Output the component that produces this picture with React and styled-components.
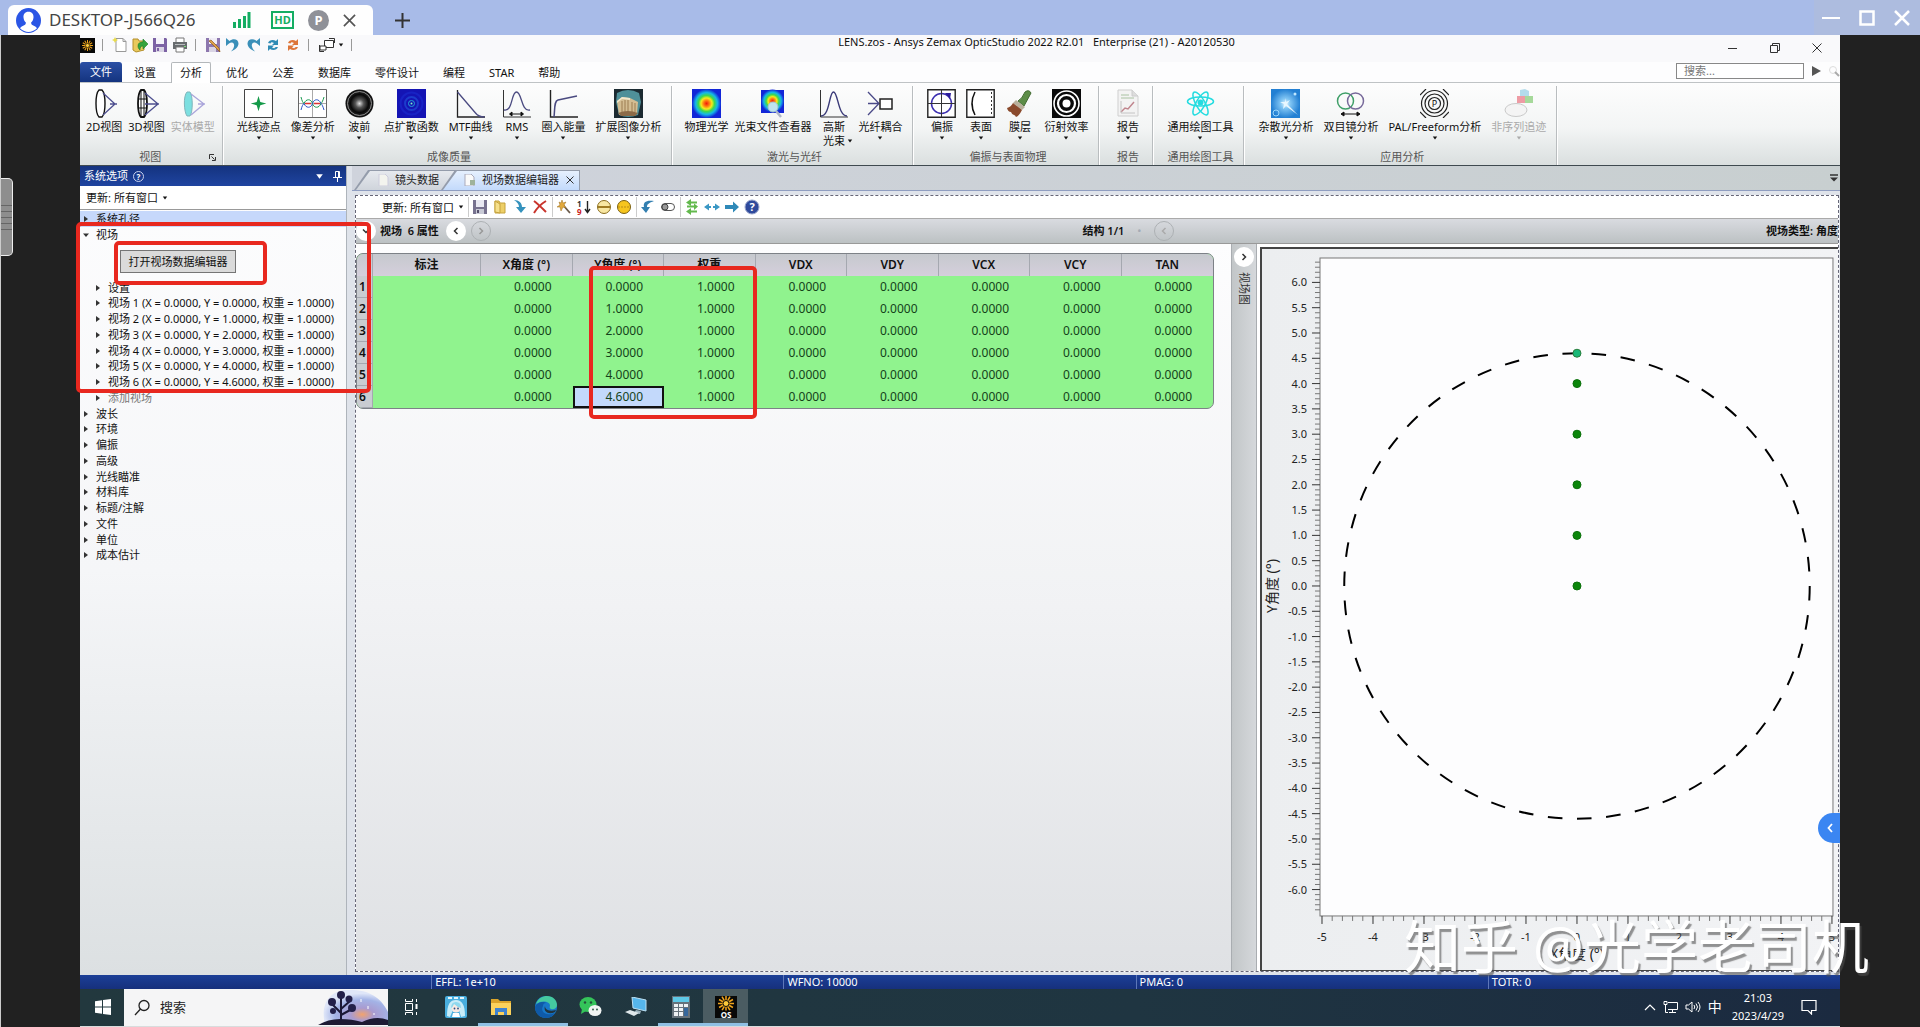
import React from "react";
import styled, { createGlobalStyle, css } from "styled-components";

const GlobalStyle = createGlobalStyle`
  * {
    box-sizing: border-box;
  }

  body {
    margin: 0;
    font-family: "Noto Sans", "Noto Sans CJK SC", sans-serif;
    font-size: 11px;
    line-height: 16px;
    color: #111;
  }

  button,
  input,
  select {
    font: inherit;
    color: inherit;
    margin: 0;
    padding: 0;
    border: none;
    background: none;
  }

  svg {
    display: block;
    flex: none;
  }
`;

/* ---------- small drawings ---------- */

const Svg = ({ w = 16, h = w, vb = 16, vh = vb, children }) => (
  <svg width={w} height={h} viewBox={`0 0 ${vb} ${vh}`} fill="none" aria-hidden="true">
    {children}
  </svg>
);

const Caret = ({ size = 6 }) => (
  <Svg w={size} vb={6}>
    <path d="M0.8 1.5h4.4L3 4.5z" fill="currentColor" />
  </Svg>
);

const Arrow = ({ open }) => (
  <Svg w={6} vb={6}>
    <path d={open ? "M0 1.5h6L3 5z" : "M1 0l4 3-4 3z"} fill="#333" />
  </Svg>
);

const Sun = ({ size = 16, label }) => (
  <Svg w={size} vb={22}>
    <rect width="22" height="22" fill="#080808" />
    <g stroke="#f0a41c" strokeWidth="1.5">
      {[0, 30, 60, 90, 120, 150].map((a) => (
        <path
          key={a}
          d="M3 0h16"
          transform={label ? `translate(3 7.5) rotate(${a} 8 0) translate(-3)` : `translate(0 11) rotate(${a} 11 0)`}
        />
      ))}
    </g>
    <circle cx="11" cy={label ? 7.5 : 11} r="3" fill="#fcc93a" stroke="#080808" />
    {label && <rect y="14.5" width="22" height="7.5" fill="#080808" />}
    {label && (
      <text x="11" y="21.5" fill="#fff" fontSize="8" fontWeight="700" textAnchor="middle">
        OS
      </text>
    )}
  </Svg>
);

const quick = {
  new: (
    <Svg>
      <path d="M4 1.5h7l3 3v10H4z" fill="#fff" stroke="#999" />
      <path d="M11 1.5v3h3" stroke="#999" />
      <path d="M3 0l1 2 2 1-2 1-1 2-1-2-2-1 2-1z" fill="#e9dc4a" />
    </Svg>
  ),
  open: (
    <Svg>
      <path d="M1 2h5l1 2h5v9l-8 2-3-2z" fill="#e9c95c" stroke="#b48f2b" />
      <path d="M6 9c0-3 2-4 5-4V2l5 5-5 5V9c-2 0-3 1-3 4-1-1-2-2-2-4z" fill="#35a33c" stroke="#1c7d29" strokeWidth=".6" />
    </Svg>
  ),
  save: (
    <Svg>
      <path d="M1 1h13l1 1v13H1z" fill="#7c62a4" />
      <path d="M4 1h8v6H4z" fill="#f5f3fa" />
      <path d="M4 10h8v5H4z" fill="#d9d4e4" />
      <path d="M5 11h2v3H5z" fill="#7c62a4" />
    </Svg>
  ),
  print: (
    <Svg>
      <path d="M4 1h8v5H4z" fill="#fff" stroke="#777" />
      <path d="M1 5h14v7H1z" fill="#676b6e" />
      <path d="M3 7h10v1H3z" fill="#b8bcbe" />
      <path d="M4 10h8v5H4z" fill="#fff" stroke="#777" />
      <path d="M12 9h2v1h-2z" fill="#7be07b" />
    </Svg>
  ),
  saveAs: (
    <Svg>
      <path d="M1 1h14v14H1z" fill="#8d77ae" />
      <path d="M4 1h8v6H4z" fill="#f0edf6" />
      <path d="M4 10h7v5H4z" fill="#d9d4e4" />
      <path d="M4 4l9 9 2 2-1-4-8-8z" fill="#dfa046" stroke="#8e5c1d" strokeWidth=".7" />
    </Svg>
  ),
  undo: (
    <Svg>
      <path d="M1 1v8l3-2.5c3-2.5 6-.5 5 3-.5 2-1.5 3.5-3 5 4-1.5 7.5-4.500 7.5-8C13.500 2 8 1 4.500 4z" fill="#3a8fb8" />
    </Svg>
  ),
  redo: (
    <Svg>
      <path d="M15 1v8l-3-2.5c-3-2.5-6-.5-5 3 .5 2 1.5 3.5 3 5-4-1.500-7.500-4.500-7.500-8C2.500 2 8 1 11.500 4z" fill="#3a8fb8" />
    </Svg>
  ),
};

const Sync = ({ color }) => (
  <Svg>
    <path d="M3 6c1-3 5-4 8-2l2-2v6H7l2-2C7 5 6 5 5.5 6.5z" fill={color} />
    <path d="M13 10c-1 3-5 4-8 2l-2 2V8.5h6l-2 2c2 1 3 1 3.5-.5z" fill={color} />
  </Svg>
);

const Windows = () => (
  <Svg w={18} h={16} vb={18} vh={16}>
    <path d="M6.5 3.5h9v7h-9z" fill="#fff" stroke="#333" />
    <path d="M11 1.5h5.5V6M6 14.5H1.5V8" stroke="#333" />
    <path d="M2 9h6v4H2z" fill="#fff" stroke="#333" />
  </Svg>
);

const lensPath = "M9 1c-4 4-4 23 0 27h3c4-4 4-23 0-27z";

const ribbonIcons = {
  lens2d: (
    <Svg w={29} vb={29}>
      <path d={lensPath} fill="#fff" stroke="#111" strokeWidth="1.4" />
      <path d="M13 4l12 11-12 11M20 15h7" stroke="#4d4f8f" strokeWidth="1.3" />
    </Svg>
  ),
  lens3d: (
    <Svg w={29} vb={29}>
      <path d={lensPath} fill="#fff" stroke="#111" strokeWidth="1.8" />
      <path d="M9 1v27M12 1v27M6 10h9M6 19h9" stroke="#111" />
      <path d="M13 4l13 11-13 11M13 15h14" stroke="#4d4f8f" strokeWidth="1.3" />
    </Svg>
  ),
  solid: (
    <Svg w={29} vb={29}>
      <path d="M9 3c-4 4-3 20 0 24h3c3-4 3-20 0-24z" fill="#7cdfe0" stroke="#7fb5bb" />
      <path d="M13 5l13 10-13 11M20 15h7" stroke="#aaa5da" strokeWidth="1.3" />
    </Svg>
  ),
  spot: (
    <Svg w={29} vb={29}>
      <path d="M.5.5h28v28H.5z" fill="#fff" stroke="#444" />
      <path d="M14.5 7l1.8 6 6 1.5-6 1.7-1.8 6-1.8-6-6-1.7 6-1.5z" fill="#149a49" />
    </Svg>
  ),
  fan: (
    <Svg w={29} vb={29}>
      <path d="M.5.5h28v28H.5z" fill="#fff" stroke="#666" />
      <path d="M14.5 1v27M1 14.5h27" stroke="#aaa" />
      <path d="M3 8c1 4 2 6 3 6.5 2-5 7-5 8.500 0s6.500 5 8.500 0c1-1 2-3 3-6.500" stroke="#1a9a50" />
      <path d="M3 21c1-4 2-6 3-6.500 2 5 7 5 8.500 0s6.500-5 8.500 0c1 1 2 3 3 6.500" stroke="#2a55c8" />
      <path d="M7 14.5h6M16 14.5h6" stroke="#d33" strokeWidth="1.5" />
    </Svg>
  ),
  wave: (
    <Svg w={29} vb={29}>
      <defs>
        <radialGradient id="wave">
          <stop offset="0" stopColor="#ddd" />
          <stop offset=".35" stopColor="#555" />
          <stop offset=".75" stopColor="#080808" />
          <stop offset="1" stopColor="#222" />
        </radialGradient>
      </defs>
      <circle cx="14.5" cy="14.5" r="14" fill="#111" />
      <circle cx="14.5" cy="14.5" r="12" fill="url(#wave)" stroke="#8d8d8d" />
    </Svg>
  ),
  psf: (
    <Svg w={29} vb={29}>
      <path d="M0 0h29v29H0z" fill="#1414b4" />
      <circle cx="14.5" cy="14.5" r="11" stroke="#1822c4" strokeWidth="2" />
      <circle cx="14.5" cy="14.5" r="6.5" stroke="#1c3ccc" strokeWidth="2" />
      <circle cx="14.5" cy="14.5" r="3" stroke="#23a2d8" />
      <circle cx="14.5" cy="14.5" r="1" fill="#7df0c0" />
    </Svg>
  ),
  mtf: (
    <Svg w={29} vb={29}>
      <path d="M1.5 1v27H29" stroke="#222" strokeWidth="1.3" />
      <path d="M1.5 3l18 21q3 4 9 4" stroke="#4a4a80" strokeWidth="1.3" />
    </Svg>
  ),
  rms: (
    <Svg w={29} vb={29}>
      <path d="M1.5 1v27H29" stroke="#333" />
      <path d="M2 21c9 2 7-18 12.5-18S19 23 28 21" stroke="#4a4a80" strokeWidth="1.3" />
      <path d="M8 25h13M10 23l-2.5 2 2.5 2zM19 23l2.5 2-2.5 2z" stroke="#111" fill="#111" />
    </Svg>
  ),
  energy: (
    <Svg w={29} vb={29}>
      <path d="M1.5 1v27H29" stroke="#222" strokeWidth="1.4" />
      <path d="M5 28c1-8 0-16 4-17l19-4" stroke="#4a4a80" strokeWidth="1.5" />
    </Svg>
  ),
  image: (
    <Svg w={29} vb={29}>
      <path d="M0 0h29v29H0z" fill="#1b2a31" />
      <path d="M3 4q11-6 22 0l2 9-3 13q-10 4-19 0L2 13z" fill="#4f9099" />
      <path d="M3 12l5-4 8 1 8 4-1 12-18 1z" fill="#d3bd92" />
      <path d="M3 12l5-4 8 1v2l-8-1-5 4z" fill="#f1e7cc" />
      <path d="M8 12v12M11 11v13M14 11v13M18 13v10M21 14v9" stroke="#9b7c50" />
      <path d="M4 24q10-4 20 0l-3 3H7z" fill="#8c6b48" />
    </Svg>
  ),
  optics: (
    <Svg w={29} vb={29}>
      <defs>
        <radialGradient id="heat">
          <stop offset="0" stopColor="#f01c0c" />
          <stop offset=".2" stopColor="#ff7a10" />
          <stop offset=".38" stopColor="#f4ec1c" />
          <stop offset=".55" stopColor="#3fd94a" />
          <stop offset=".75" stopColor="#15b8e8" />
          <stop offset="1" stopColor="#1226d8" />
        </radialGradient>
      </defs>
      <path d="M0 0h29v29H0z" fill="#1226d8" />
      <circle cx="14.5" cy="14.5" r="14.5" fill="url(#heat)" />
    </Svg>
  ),
  beam: (
    <Svg w={29} vb={29}>
      <path d="M3 1h23v23H3z" fill="#1226d8" />
      <circle cx="14.5" cy="12" r="11.5" fill="url(#heat)" />
      <path d="M18 22l5 6" stroke="#aeb6c8" strokeWidth="2.5" />
      <circle cx="15" cy="18" r="5" fill="#bfe3ee" stroke="#a2c4cc" />
    </Svg>
  ),
  gauss: (
    <Svg w={29} vb={29}>
      <path d="M1.5 1v27H29" stroke="#333" />
      <path d="M2 27c9 0 8-24 12.5-24S19 27 28 27" stroke="#3a3a78" strokeWidth="1.4" />
    </Svg>
  ),
  fiber: (
    <Svg w={29} vb={29}>
      <path d="M2 3l11 11.5L2 26M2 14.5h11" stroke="#4a4a88" strokeWidth="1.3" />
      <path d="M14 10h12v10H14z" fill="#fff" stroke="#222" strokeWidth="1.5" />
    </Svg>
  ),
  polar: (
    <Svg w={29} vb={29}>
      <path d="M.8.8h27.400v27.400H.8z" fill="#fff" stroke="#222" strokeWidth="1.4" />
      <circle cx="14.5" cy="14.5" r="10" stroke="#3c2fb0" strokeWidth="1.5" />
      <path d="M14.5 1v27M1 14.5h27" stroke="#333" />
      <path d="M18 4l6 0-1 6z" fill="#2b1c9c" />
    </Svg>
  ),
  surface: (
    <Svg w={29} vb={29}>
      <path d="M.8.8h27.400v27.400H.8z" fill="#fff" stroke="#222" strokeWidth="1.4" />
      <path d="M9 3q-6 11.500 0 23" stroke="#111" strokeWidth="1.5" />
      <path d="M25.5 3v24" stroke="#333" strokeDasharray="2 2" />
    </Svg>
  ),
  brush: (
    <Svg w={29} vb={29}>
      <path d="M20 3q4-3 6 1l-7 13-6-5q4-2 7-9z" fill="#5d8d47" stroke="#426b31" />
      <path d="M11 11l9 7-3 3-9-7z" fill="#b9b09b" />
      <path d="M8 14l9 7q-3 6-6 7-1-2-2-2-2 0-3-3-3 0-4-4 4-1 6-5z" fill="#8a4a2c" />
    </Svg>
  ),
  rings: (
    <Svg w={29} vb={29}>
      <path d="M0 0h29v29H0z" fill="#0a0a0a" />
      <circle cx="14.5" cy="14.5" r="12.5" stroke="#fff" strokeWidth="1.6" />
      <circle cx="14.5" cy="14.5" r="8.5" stroke="#fff" strokeWidth="2.2" />
      <circle cx="14.5" cy="14.5" r="4" fill="#fff" />
    </Svg>
  ),
  report: (
    <Svg w={29} vb={29}>
      <path d="M5 1h14l6 6v20H5z" fill="#f3f3f3" stroke="#cfcfcf" />
      <path d="M19 1v6h6" fill="#ddd" stroke="#ccc" />
      <path d="M8 6h8M8 9h13" stroke="#a9c2a2" />
      <path d="M8 23l4-4 3 1 6-7" stroke="#c0868e" strokeWidth="1.5" />
      <path d="M8 12v12h14" stroke="#c4c4c4" />
    </Svg>
  ),
  atom: (
    <Svg w={29} vb={29}>
      <g stroke="#25dce0" strokeWidth="1.5">
        <ellipse cx="14.5" cy="14.5" rx="4.5" ry="13" transform="rotate(30 14.5 14.5)" />
        <ellipse cx="14.5" cy="14.5" rx="4.5" ry="13" transform="rotate(-30 14.5 14.5)" />
        <ellipse cx="14.5" cy="12.5" rx="13" ry="4.5" />
      </g>
      <circle cx="14.5" cy="13.5" r="3" fill="#25dce0" />
    </Svg>
  ),
  stray: (
    <Svg w={29} vb={29}>
      <defs>
        <radialGradient id="stray">
          <stop offset="0" stopColor="#e4f6ff" />
          <stop offset=".35" stopColor="#7fc4f3" />
          <stop offset="1" stopColor="#2380d3" />
        </radialGradient>
      </defs>
      <path d="M0 0h29v29H0z" fill="url(#stray)" />
      <path d="M14 9l1 4 4-2-3 4 11 11-12-9-3 3 1-5-4-2 5 0z" fill="#e8f7ff" />
      <circle cx="5" cy="24" r="3" stroke="#9bd6fa" />
      <circle cx="24" cy="5" r="1.5" fill="#bfe7ff" />
    </Svg>
  ),
  binocular: (
    <Svg w={29} vb={29}>
      <circle cx="9.5" cy="12" r="8" stroke="#3f9f68" strokeWidth="1.5" />
      <circle cx="19.5" cy="12" r="8" stroke="#77699a" strokeWidth="1.5" />
      <path d="M6 25h17M8 23l-3 2 3 2zM21 23l3 2-3 2z" stroke="#111" fill="#111" />
    </Svg>
  ),
  pal: (
    <Svg w={29} vb={29}>
      <g stroke="#222" strokeWidth="1.2">
        <circle cx="14.5" cy="14.5" r="6" />
        <circle cx="14.5" cy="14.5" r="9.5" />
        <circle cx="14.5" cy="14.5" r="13" />
        <path d="M0 6l6-6M23 0l6 6M0 23l6 6M23 29l6-6" />
      </g>
      <text x="14.5" y="18" fill="#111" fontSize="9" textAnchor="middle">
        P
      </text>
    </Svg>
  ),
  nonSeq: (
    <Svg w={29} vb={29}>
      <path d="M16 1l5-1 4 2v7h-9z" fill="#b3dcec" />
      <path d="M13 7h8v7h-8z" fill="#ee9ba4" />
      <path d="M21 7h8v7h-8z" fill="#a6d99a" />
      <ellipse cx="12" cy="21" rx="11" ry="6.5" fill="#f4f4f4" stroke="#c9c9c9" />
    </Svg>
  ),
};

const toolIcons = {
  save: (
    <Svg>
      <path d="M1 1h14v14H1z" fill="#77728f" />
      <path d="M4 1h8v7H4z" fill="#e9e9f2" />
      <path d="M4 10h8v5H4z" fill="#c9cbd6" />
      <path d="M5 11h2v3H5z" fill="#55506c" />
    </Svg>
  ),
  load: (
    <Svg>
      <path d="M3 2h4l1 2h5v10H3z" fill="#edcf67" stroke="#c5a23c" />
      <path d="M3 2l5 3v9l-5-1z" fill="#f6e08b" stroke="#c5a23c" />
    </Svg>
  ),
  down: (
    <Svg>
      <path d="M2 1c5 0 8 3 8 7h4l-5 6-5-6h3c0-3-2-5-5-7z" fill="#3592bd" />
    </Svg>
  ),
  cross: (
    <Svg>
      <path d="M2 2c4 3 8 7 12 11M14 2C9 5 5 9 2 14" stroke="#c9342c" strokeWidth="2" />
    </Svg>
  ),
  wand: (
    <Svg>
      <path d="M7 6l7 8" stroke="#6a5a4a" strokeWidth="1.8" />
      <path d="M6 1l1 3 3-1-2 3 2 3-3-1-2 4-1-4-3 0 3-2-1-3 2 1z" fill="#e2a93c" stroke="#9a6c1c" strokeWidth=".5" />
    </Svg>
  ),
  sort: (
    <Svg>
      <text x="1" y="7.5" fill="#333" fontSize="8" fontWeight="700">
        1
      </text>
      <text x="1" y="15.5" fill="#c22" fontSize="8" fontWeight="700">
        9
      </text>
      <path d="M11.5 2v11M9 10l2.500 3.500L14 10" stroke="#222" strokeWidth="1.4" />
    </Svg>
  ),
  minus: (
    <Svg>
      <circle cx="8" cy="8" r="6.5" fill="#f8e7a2" stroke="#8a6d1e" />
      <path d="M2 7h12v2H2z" fill="#a07c22" />
    </Svg>
  ),
  disc: (
    <Svg>
      <circle cx="8" cy="8" r="6.5" fill="#f6c51e" stroke="#7a5f10" />
      <path d="M2 8h12" stroke="#b98d17" strokeDasharray="2 1" />
    </Svg>
  ),
  back: (
    <Svg>
      <path d="M14 2C6 1 3 3 4 8H1l5 6 4-6H7c0-3 2-4 7-6z" fill="#337fb0" />
    </Svg>
  ),
  toggle: (
    <Svg>
      <rect x="1.5" y="4.5" width="13" height="7" rx="3.5" fill="#fff" stroke="#555" />
      <circle cx="5" cy="8" r="3" fill="#999" stroke="#444" />
    </Svg>
  ),
  swap: (
    <Svg>
      <path d="M13 3.500H6M3 7.500h8M13 12.500H6" stroke="#63b94d" strokeWidth="2" />
      <path d="M7 0L2 3.500 7 7zM10 4.500l4 3-4 3.500zM7 9l-5 3.500L7 16z" fill="#63b94d" />
    </Svg>
  ),
  both: (
    <Svg>
      <path d="M0 8l5-3.500V7h2v2H5v2.500zM16 8l-5-3.500V7H9v2h2v2.500z" fill="#3a97c4" />
    </Svg>
  ),
  right: (
    <Svg>
      <path d="M1 6h8V2.500L15 8l-6 5.500V10H1z" fill="#2f89b8" />
    </Svg>
  ),
  help: (
    <Svg>
      <circle cx="8" cy="8" r="7" fill="#2f4a9c" stroke="#9aa6cc" />
      <text x="8" y="12" fill="#fff" fontSize="11" fontWeight="700" textAnchor="middle">
        ?
      </text>
    </Svg>
  ),
};

/* ---------- data ---------- */

const menuTabs = ["设置", "分析", "优化", "公差", "数据库", "零件设计", "编程", "STAR", "帮助"];

const ribbon = [
  {
    title: "视图",
    launcher: true,
    items: [
      ["lens2d", "2D视图"],
      ["lens3d", "3D视图"],
      ["solid", "实体模型", { muted: true }],
    ],
  },
  {
    title: "成像质量",
    items: [
      ["spot", "光线迹点", { menu: true }],
      ["fan", "像差分析", { menu: true }],
      ["wave", "波前", { menu: true }],
      ["psf", "点扩散函数", { menu: true }],
      ["mtf", "MTF曲线", { menu: true }],
      ["rms", "RMS", { menu: true }],
      ["energy", "圈入能量", { menu: true }],
      ["image", "扩展图像分析", { menu: true }],
    ],
  },
  {
    title: "激光与光纤",
    items: [
      ["optics", "物理光学"],
      ["beam", "光束文件查看器"],
      ["gauss", "高斯", { second: "光束" }],
      ["fiber", "光纤耦合", { menu: true }],
    ],
  },
  {
    title: "偏振与表面物理",
    items: [
      ["polar", "偏振", { menu: true }],
      ["surface", "表面", { menu: true }],
      ["brush", "膜层", { menu: true }],
      ["rings", "衍射效率", { menu: true }],
    ],
  },
  { title: "报告", items: [["report", "报告", { menu: true }]] },
  { title: "通用绘图工具", items: [["atom", "通用绘图工具", { menu: true }]] },
  {
    title: "应用分析",
    items: [
      ["stray", "杂散光分析", { menu: true }],
      ["binocular", "双目镜分析", { menu: true }],
      ["pal", "PAL/Freeform分析", { menu: true }],
      ["nonSeq", "非序列追迹", { menu: true, muted: true }],
    ],
  },
];

const fields = [0, 1, 2, 3, 4, 4.6];
const fieldColumns = ["标注", "X角度 (°)", "Y角度 (°)", "权重", "VDX", "VDY", "VCX", "VCY", "TAN"];
const treeRest = ["波长", "环境", "偏振", "高级", "光线瞄准", "材料库", "标题/注解", "文件", "单位", "成本估计"];
const editorTools = [
  ["save", "load", "down", "cross"],
  ["wand", "sort", "minus", "disc"],
  ["back", "toggle"],
  ["swap", "both", "right", "help"],
];
const statuses = ["", "EFFL: 1e+10", "WFNO: 10000", "PMAG: 0", "TOTR: 0"];

/* ---------- field plot ---------- */

const X_UNIT = 51;
const Y_UNIT = 50.6;
const X0 = 315;
const Y0 = 337;
const plot = { left: 58, top: 9, right: 571, bottom: 667 };

const FieldPlot = () => {
  const yTicks = [];
  for (let i = -64; i <= 64; i++) yTicks.push(i);
  const xTicks = [];
  for (let i = -25; i <= 25; i++) xTicks.push(i);
  const r = 4.6 * Y_UNIT;

  return (
    <Chart viewBox="0 0 576 721" preserveAspectRatio="xMinYMin meet" role="img" aria-label="视场图">
      <rect
        x={plot.left}
        y={plot.top}
        width={plot.right - plot.left}
        height={plot.bottom - plot.top}
        fill="#fdfdfe"
        stroke="#777"
      />
      {yTicks.map((i) => {
        const y = Y0 - (i / 10) * Y_UNIT;
        const major = i % 5 === 0 && Math.abs(i) <= 60;
        return (
          <g key={i}>
            <path d={`M${plot.left - (major ? 8 : 5)} ${y}H${plot.left}`} stroke={major ? "#333" : "#777"} />
            {major && (
              <text x="45" y={y + 4} textAnchor="end">
                {(i / 10).toFixed(1)}
              </text>
            )}
          </g>
        );
      })}
      {xTicks.map((i) => {
        const x = X0 + (i / 5) * X_UNIT;
        const major = i % 5 === 0;
        return (
          <g key={i}>
            <path d={`M${x} ${plot.bottom}v${major ? 8 : 5}`} stroke={major ? "#333" : "#777"} />
            {major && (
              <text x={x} y="692" textAnchor="middle">
                {i / 5}
              </text>
            )}
          </g>
        );
      })}
      <path
        d={`M${X0} ${Y0 + r}a${r} ${r} 0 0 0 0 ${-2 * r}a${r} ${r} 0 0 0 0 ${2 * r}`}
        fill="none"
        stroke="#000"
        strokeWidth="2"
        pathLength="100"
        strokeDasharray="1 1"
      />
      {fields.map((f) => (
        <circle
          key={f}
          cx={X0}
          cy={Y0 - f * Y_UNIT}
          r="4"
          fill={f === 4.6 ? "#19b878" : "#0b860b"}
          stroke={f === 4.6 ? "#2b7d3c" : "#0b6f0b"}
        />
      ))}
      <text className="axis" x={X0} y="710" textAnchor="middle">
        X角度 (°)
      </text>
      <text className="axis" textAnchor="middle" transform={`translate(15 ${Y0}) rotate(-90)`}>
        Y角度 (°)
      </text>
    </Chart>
  );
};

/* ---------- page ---------- */

const RibbonItem = ({ icon, label, menu, muted, second }) => (
  <RibbonButton $wide={menu || second} $muted={muted}>
    {ribbonIcons[icon]}
    <span>{label}</span>
    {second && (
      <span className="second">
        {second} <Caret />
      </span>
    )}
    {menu && <Caret />}
  </RibbonButton>
);

const UpdateSelect = ({ id }) => (
  <Update htmlFor={id}>
    更新:
    <select id={id} defaultValue="all">
      <option value="all">所有窗口</option>
    </select>
    <Caret />
  </Update>
);

const App = () => {
  return (
    <Page>
      <GlobalStyle />
      <RemoteBar>
        <RemoteTab>
          <Svg w={25} vb={24}>
            <circle cx="12" cy="12" r="12" fill="#2a55e5" />
            <path d="M12 3.500c3.500 0 5 2.500 4.800 5.500-.2 2.500-1.300 4-2.300 5 0 2 1 2.500 3 3.200 1.500.6 2.500 1.500 2.500 2.500-5 4.300-11 4.300-16 0 0-1 1-1.900 2.500-2.500 2-.7 3-1.200 3-3.200-1-1-2.100-2.500-2.300-5C7 6 8.500 3.500 12 3.500z" fill="#fff" />
          </Svg>
          <strong>DESKTOP-J566Q26</strong>
          <Svg w={18} h={16} vb={18} vh={16}>
            <path d="M1.5 10v6M6.5 7v9M11.5 4v12M16 0v16" stroke="#14ad63" strokeWidth="3" />
          </Svg>
          <Hd>HD</Hd>
          <Round>P</Round>
          <button aria-label="关闭标签">
            <Svg w={13} vb={14}>
              <path d="M1 1l12 12M13 1L1 13" stroke="#555" strokeWidth="1.8" />
            </Svg>
          </button>
        </RemoteTab>
        <NewTab aria-label="新建标签">
          <Svg w={15} vb={15}>
            <path d="M7.5 0v15M0 7.5h15" stroke="#333" strokeWidth="2" />
          </Svg>
        </NewTab>
        <RemoteControls>
          <button aria-label="最小化">
            <Svg w={18} vb={18}>
              <path d="M0 9h18" stroke="#fff" strokeWidth="2" />
            </Svg>
          </button>
          <button aria-label="最大化">
            <Svg w={16} vb={16}>
              <path d="M1.5 1.5h13v13h-13z" stroke="#fff" strokeWidth="2.5" />
            </Svg>
          </button>
          <button aria-label="关闭">
            <Svg w={16} vb={16}>
              <path d="M1 1l14 14M15 1L1 15" stroke="#fff" strokeWidth="2.5" />
            </Svg>
          </button>
        </RemoteControls>
      </RemoteBar>

      <Stage>
        <Handle aria-label="侧边栏">
          <i />
          <i />
          <i />
          <i />
          <i />
        </Handle>

        <Desktop>
          <TitleRow>
            <QuickAccess>
              <Sun size={15} />
              <Rule />
              {["new", "open", "save", "print"].map((k) => (
                <button key={k} aria-label={k}>
                  {quick[k]}
                </button>
              ))}
              <Rule />
              {["saveAs", "undo", "redo"].map((k) => (
                <button key={k} aria-label={k}>
                  {quick[k]}
                </button>
              ))}
              <button aria-label="刷新">
                <Sync color="#2f8bb5" />
              </button>
              <button aria-label="全部刷新">
                <Sync color="#dd7539" />
              </button>
              <Rule />
              <button className="windows" aria-label="窗口">
                <Windows />
                <Caret />
              </button>
              <Rule />
            </QuickAccess>
            <h1>LENS.zos - Ansys Zemax OpticStudio 2022 R2.01&nbsp;&nbsp; Enterprise (21) - A20120530</h1>
            <WindowButtons>
              <button aria-label="最小化">
                <Svg w={10} vb={10}>
                  <path d="M0 5.5h9" stroke="#333" />
                </Svg>
              </button>
              <button aria-label="还原">
                <Svg w={10} vb={10}>
                  <path d="M.5 2.5h7v7h-7zM2.5 2.5v-2h7v7h-2" stroke="#333" />
                </Svg>
              </button>
              <button aria-label="关闭">
                <Svg w={10} vb={10}>
                  <path d="M.5.5l9 9M9.5.5l-9 9" stroke="#333" />
                </Svg>
              </button>
            </WindowButtons>
          </TitleRow>

          <MenuRow>
            <FileTab>文件</FileTab>
            {menuTabs.map((t) => (
              <MenuTab key={t} $active={t === "分析"}>
                {t}
              </MenuTab>
            ))}
            <SearchBox>
              <input type="text" placeholder="搜索..." aria-label="搜索" />
              <Svg w={10} vb={10}>
                <path d="M1 0l9 5-9 5z" fill="#555" />
              </Svg>
              <Svg w={12} vb={12}>
                <circle cx="5" cy="5" r="3.5" stroke="#ddd" />
                <path d="M7 7l4 4" stroke="#aaa" strokeWidth="2" />
              </Svg>
            </SearchBox>
          </MenuRow>

          <Ribbon>
            {ribbon.map((g) => (
              <Group key={g.title} $tight={g.launcher}>
                <div className="items">
                  {g.items.map(([icon, label, opts]) => (
                    <RibbonItem key={label} icon={icon} label={label} {...opts} />
                  ))}
                </div>
                <footer>
                  {g.title}
                  {g.launcher && (
                    <Launcher aria-label="更多">
                      <Svg w={7} vb={7}>
                        <path d="M.5 5V.5H5M2.5 2.5l3 3M6.5 3v3.5H3" stroke="#333" />
                      </Svg>
                    </Launcher>
                  )}
                </footer>
              </Group>
            ))}
          </Ribbon>

          <Body>
            <Sidebar>
              <SideHeader>
                <span>系统选项</span>
                <b>?</b>
                <Caret size={9} />
                <Svg w={9} h={11} vb={9} vh={11}>
                  <path d="M2.5 6.5v-6h4v6M5.5 1v5M0 6.5h9M4.5 7v4" stroke="#fff" />
                </Svg>
              </SideHeader>
              <SideUpdate>
                <UpdateSelect id="side-update" />
              </SideUpdate>
              <Tree>
                <TreeRow $selected>
                  <Arrow />
                  系统孔径
                </TreeRow>
                <TreeRow>
                  <Arrow open />
                  视场
                </TreeRow>
                <li>
                  <OpenEditor>打开视场数据编辑器</OpenEditor>
                </li>
                <TreeRow $nested>
                  <Arrow />
                  设置
                </TreeRow>
                {fields.map((f, i) => (
                  <TreeRow key={f} $nested>
                    <Arrow />
                    {`视场 ${i + 1} (X = 0.0000, Y = ${f.toFixed(4)}, 权重 = 1.0000)`}
                  </TreeRow>
                ))}
                <TreeRow $nested $muted>
                  <Arrow />
                  添加视场
                </TreeRow>
                {treeRest.map((t) => (
                  <TreeRow key={t}>
                    <Arrow />
                    {t}
                  </TreeRow>
                ))}
              </Tree>
            </Sidebar>

            <Editor>
              <DocTabs>
                <DocTab>
                  <Svg w={12} vb={12}>
                    <path d="M2 0h6l3 3v9H2z" fill="#f3f4ee" stroke="#ccd" />
                  </Svg>
                  镜头数据
                </DocTab>
                <DocTab $active>
                  <Svg w={12} vb={12}>
                    <path d="M1 0h6l3 3v9H1z" fill="#fafafa" stroke="#aab" />
                    <path d="M6 6h5v5H6z" fill="#9fb39a" />
                  </Svg>
                  视场数据编辑器
                  <button aria-label="关闭">
                    <Svg w={8} vb={8}>
                      <path d="M.5.5l7 7M7.5.5l-7 7" stroke="#333" />
                    </Svg>
                  </button>
                </DocTab>
                <TabMenu aria-label="标签列表">
                  <Svg w={8} vb={8}>
                    <path d="M0 1h8" stroke="#333" strokeWidth="1.5" />
                    <path d="M0 3.5h8L4 7.5z" fill="#333" />
                  </Svg>
                </TabMenu>
              </DocTabs>

              <Frame>
                <Toolbar>
                  <UpdateSelect id="editor-update" />
                  {editorTools.map((set, i) => (
                    <div key={i}>
                      {set.map((k) => (
                        <button key={k} aria-label={k}>
                          {toolIcons[k]}
                        </button>
                      ))}
                    </div>
                  ))}
                </Toolbar>

                <FieldBar>
                  <CircleButton aria-label="展开">
                    <Svg w={8} vb={8}>
                      <path d="M1 2.5l3 3 3-3" stroke="#333" strokeWidth="1.5" />
                    </Svg>
                  </CircleButton>
                  <strong>视场&nbsp; 6 属性</strong>
                  <CircleButton aria-label="上一视场">
                    <Svg w={8} vb={8}>
                      <path d="M5.5 1l-3 3 3 3" stroke="#333" strokeWidth="1.5" />
                    </Svg>
                  </CircleButton>
                  <CircleButton aria-label="下一视场" disabled>
                    <Svg w={8} vb={8}>
                      <path d="M2.5 1l3 3-3 3" stroke="#999" strokeWidth="1.5" />
                    </Svg>
                  </CircleButton>
                  <Config>
                    <strong>结构 1/1</strong>
                    <span>•</span>
                    <CircleButton aria-label="上一结构" disabled>
                      <Svg w={8} vb={8}>
                        <path d="M5.5 1l-3 3 3 3" stroke="#aaa" strokeWidth="1.5" />
                      </Svg>
                    </CircleButton>
                  </Config>
                  <strong>视场类型: 角度</strong>
                </FieldBar>

                <Panes>
                  <TablePane>
                    <FieldTable>
                      <colgroup>
                        <col className="index" />
                        <col className="note" />
                      </colgroup>
                      <thead>
                        <tr>
                          <th aria-label="序号" />
                          {fieldColumns.map((c) => (
                            <th key={c} scope="col">
                              {c}
                            </th>
                          ))}
                        </tr>
                      </thead>
                      <tbody>
                        {fields.map((f, i) => (
                          <tr key={f}>
                            <th scope="row">{i + 1}</th>
                            <td />
                            <td>0.0000</td>
                            <td className={f === 4.6 ? "current" : undefined}>{f.toFixed(4)}</td>
                            <td>1.0000</td>
                            <td>0.0000</td>
                            <td>0.0000</td>
                            <td>0.0000</td>
                            <td>0.0000</td>
                            <td>0.0000</td>
                          </tr>
                        ))}
                      </tbody>
                    </FieldTable>
                  </TablePane>
                  <Strip>
                    <CircleButton aria-label="收起视场图">
                      <Svg w={8} vb={8}>
                        <path d="M2.5 1l3 3-3 3" stroke="#333" strokeWidth="1.5" />
                      </Svg>
                    </CircleButton>
                    <span>视场图</span>
                  </Strip>
                  <PlotPane>
                    <FieldPlot />
                  </PlotPane>
                </Panes>
              </Frame>
            </Editor>
          </Body>

          <StatusBar>
            {statuses.map((s) => (
              <span key={s}>{s}</span>
            ))}
          </StatusBar>

          <Taskbar>
            <TaskButton aria-label="开始">
              <Svg w={16} vb={16}>
                <path d="M0 2.2l7-1V7.5H0zM8 1l8-1v7.5H8zM0 8.5h7v6.3l-7-1zM8 8.5h8V16l-8-1z" fill="#fff" />
              </Svg>
            </TaskButton>
            <TaskSearch>
              <Svg w={17} vb={17}>
                <circle cx="10" cy="6.5" r="5" stroke="#222" strokeWidth="1.3" />
                <path d="M6.5 10L1 16" stroke="#222" strokeWidth="1.3" />
              </Svg>
              <input type="text" placeholder="搜索" aria-label="任务栏搜索" />
              <Svg w={70} h={36} vb={70} vh={36}>
                <defs>
                  <radialGradient id="dusk" cx=".6" cy=".7" r=".6">
                    <stop offset="0" stopColor="#f2a36e" />
                    <stop offset=".3" stopColor="#a99bd0" />
                    <stop offset=".7" stopColor="#a3b3e6" />
                    <stop offset="1" stopColor="#dfe6f8" />
                  </radialGradient>
                </defs>
                <path d="M6 30C4 14 12 2 28 1c22-1 34 6 42 22v13H6z" fill="url(#dusk)" />
                <path d="M0 36q10-6 22-6t22 3q14-7 26-2v5z" fill="#1d1a33" />
                <path d="M23 32V8M23 24l-9-9M23 20l9-8M23 26l11-6" stroke="#1b1836" strokeWidth="2" />
                <g fill="#23204a">
                  <circle cx="23" cy="6" r="4" />
                  <circle cx="14" cy="13" r="4" />
                  <circle cx="31" cy="10" r="3.5" />
                  <circle cx="34" cy="19" r="4" />
                  <circle cx="15" cy="22" r="3" />
                </g>
                <path d="M43 10v3M50 17v3M56 24v2" stroke="#fff" />
              </Svg>
            </TaskSearch>
            <TaskButton aria-label="任务视图">
              <Svg w={16} vb={16}>
                <path d="M2.5 4.5h7v7h-7zM2.5 0v2.5h7V0M2.5 16v-2.500h7V16M13.5 0v3M13.5 13v3" stroke="#fff" />
                <path d="M12.5 5h2v5h-2z" fill="#fff" />
              </Svg>
            </TaskButton>
            <TaskButton aria-label="相册">
              <Svg w={22} vb={22}>
                <rect width="22" height="22" rx="2" fill="#49aede" />
                <path d="M2 20C2 8 5 4 11 4s9 5 9 16l-4 1-2-7H8l-3 7z" fill="#c8ecf8" />
                <circle cx="11" cy="12" r="4.500" fill="#f9e9e2" />
                <path d="M6 12q2-1 3-4 3 3 7 4 0-6-5-6t-5 6z" fill="#8ed8ee" />
                <circle cx="9.5" cy="12.5" r=".9" fill="#2b4f86" />
                <circle cx="13" cy="12.500" r=".9" fill="#2b4f86" />
                <path d="M8 17h6l1 4H7z" fill="#fff" />
                <path d="M3 2h16" stroke="#e4f5fb" strokeWidth="2" strokeDasharray="4 2" />
              </Svg>
            </TaskButton>
            <TaskButton $running aria-label="文件资源管理器">
              <Svg w={20} vb={20}>
                <path d="M0 2h7l2 2h11v4H0z" fill="#dba42a" />
                <path d="M0 6h20v12H0z" fill="#fbd25c" />
                <path d="M4 18v-7h12v7h-3v-3H7v3z" fill="#3f83cf" />
              </Svg>
            </TaskButton>
            <TaskButton $running aria-label="浏览器">
              <Svg w={22} vb={22}>
                <circle cx="11" cy="11" r="11" fill="#1878c9" />
                <path d="M1 8C3 2 8 0 12 0c6 0 10 4 10 9 0 3-3 5-6 4-2-1-1-2-1-4-1-4-8-5-14-1z" fill="#45c9a0" />
                <path d="M8 10c-3 5 2 11 12 7-2 3-5 5-9 5C4 22 0 17 0 11c2-5 9-6 11-4-2 0-3 1-3 3z" fill="#0f5aa8" />
                <path d="M10 10c0 3 3 6 11 4l-1 2c-6 3-12 0-10-6z" fill="#22343e" />
              </Svg>
            </TaskButton>
            <TaskButton aria-label="微信">
              <Svg w={23} h={20} vb={23} vh={20}>
                <ellipse cx="9" cy="7.5" rx="8.5" ry="7.5" fill="#35c45a" />
                <path d="M3 12l-1 5 5-3z" fill="#35c45a" />
                <ellipse cx="16" cy="13.5" rx="6.5" ry="5.5" fill="#f1f4f2" />
                <g fill="#24503a">
                  <circle cx="6" cy="5.5" r="1.2" />
                  <circle cx="12" cy="5.5" r="1.2" />
                  <circle cx="14" cy="12.5" r=".9" />
                  <circle cx="18" cy="12.5" r=".9" />
                </g>
              </Svg>
            </TaskButton>
            <TaskButton aria-label="远程桌面">
              <Svg w={22} h={20} vb={22} vh={20}>
                <path d="M7 0l14 3v11L8 11z" fill="#56b6ec" stroke="#bcdff2" />
                <path d="M11 13l5 1-1 3-6-1z" fill="#9fb5c0" />
                <path d="M0 15l5-2 9 3-5 3z" fill="#dfe7ea" />
              </Svg>
            </TaskButton>
            <TaskButton $running aria-label="计算器">
              <Svg w={18} h={22} vb={18} vh={22}>
                <path d="M0 0h18v22H0z" fill="#66727b" />
                <path d="M1 1h16v5H1z" fill="#5ec8e6" />
                <path d="M2 8h4v3H2zM7 8h4v3H7zM2 12h4v3H2zM7 12h4v3H7zM2 16h4v4H2zM7 16h4v4H7zM12 8h4v3h-4z" fill="#eef2f4" />
                <path d="M12 12h4v8h-4z" fill="#35679c" />
              </Svg>
            </TaskButton>
            <TaskButton $running $current aria-label="OpticStudio">
              <Sun size={22} label />
            </TaskButton>
            <Tray>
              <Svg w={12} vb={12}>
                <path d="M1 9l5-5 5 5" stroke="#fff" strokeWidth="1.2" />
              </Svg>
              <Svg w={15} h={14} vb={15} vh={14}>
                <path d="M5 2.5h9.5v7H5M9.5 9.5v3M6 12.5h7M1 1.5h3v3H1zM2.5 5v7.5H5" stroke="#fff" />
              </Svg>
              <Svg w={16} h={14} vb={16} vh={14}>
                <path d="M1 5h2.500L7 2v10L3.500 9H1zM9 5q1.500 2 0 4M11 3.500q3 3.500 0 7M13 2q4 5 0 10" stroke="#fff" />
              </Svg>
              <span>中</span>
              <time>
                21:03
                <br />
                2023/4/29
              </time>
              <Svg w={16} vb={16}>
                <path d="M1 1.5h14v10h-4.500V15L7 11.500H1z" stroke="#fff" strokeWidth="1.2" />
              </Svg>
            </Tray>
          </Taskbar>

          <SideToggle aria-label="展开工具">
            <Svg w={6} h={10} vb={6} vh={10}>
              <path d="M5 1L1.5 5 5 9" stroke="#fff" strokeWidth="1.8" />
            </Svg>
          </SideToggle>
          <Mark $box="fields" />
          <Mark $box="button" />
          <Mark $box="values" />
        </Desktop>
        <Watermark>知乎 @光学老司机</Watermark>
      </Stage>
    </Page>
  );
};

const Page = styled.div`
  min-height: 100vh;
  display: flex;
  flex-direction: column;
  background: #212121;
`;

const RemoteBar = styled.header`
  height: 35px;
  display: flex;
  align-items: flex-end;
  padding-left: 8px;
  background: #a8bbe8;
`;

const RemoteTab = styled.div`
  width: 365px;
  height: 30px;
  display: flex;
  align-items: center;
  gap: 20px;
  padding: 0 17px 0 8px;
  border-radius: 6px 6px 0 0;
  background: #fefefe;

  strong {
    flex: 1;
    margin-left: -12px;
    font-size: 17px;
    font-weight: 400;
    line-height: 24px;
    color: #444;
  }
`;

const Hd = styled.span`
  width: 23px;
  border: 2px solid #14ad63;
  font-size: 11px;
  font-weight: 700;
  line-height: 14px;
  text-align: center;
  color: #14ad63;
`;

const Round = styled.span`
  width: 21px;
  height: 21px;
  margin: 0 -6px;
  border-radius: 50%;
  background: #8f9198;
  color: #fff;
  font-size: 13px;
  font-weight: 700;
  line-height: 21px;
  text-align: center;
`;

const NewTab = styled.button`
  height: 30px;
  padding: 0 22px;
`;

const RemoteControls = styled.div`
  height: 35px;
  display: flex;
  align-items: center;
  gap: 19px;
  margin-left: auto;
  padding: 0 10px 0 8px;
  background: #adbcdf;
`;

const Stage = styled.main`
  position: relative;
  flex: 1;
  display: flex;
  padding: 0 80px 2px 79px;
  border-left: 1px solid #ccc;
`;

const Handle = styled.button`
  position: absolute;
  left: 0;
  top: 143px;
  width: 12px;
  height: 78px;
  display: flex;
  flex-direction: column;
  justify-content: center;
  gap: 5px;
  border: 1px solid #eee;
  border-left: none;
  border-radius: 0 5px 5px 0;
  background: #8e8e8e;

  i {
    height: 1px;
    background: #666;
  }
`;

const Desktop = styled.div`
  position: relative;
  flex: 1;
  min-width: 0;
  display: flex;
  flex-direction: column;
  border-bottom: 1px solid #d8dcdd;
  background: #f9f9fb;
`;

const TitleRow = styled.div`
  height: 27px;
  display: flex;

  h1 {
    flex: 1;
    margin: 0;
    padding-right: 12px;
    font-size: 11px;
    font-weight: 400;
    line-height: 13px;
    text-align: center;
  }
`;

const QuickAccess = styled.div`
  display: flex;
  align-items: center;
  gap: 4px;
  height: 20px;

  .windows {
    display: flex;
    align-items: center;
    gap: 2px;
  }
`;

const Rule = styled.i`
  width: 1px;
  height: 12px;
  margin: 0 5px 0 3px;
  background: #999;
`;

const WindowButtons = styled.div`
  display: flex;
  align-items: center;
  gap: 32px;
  padding: 0 18px 2px 0;
`;

const MenuRow = styled.div`
  height: 21px;
  display: flex;
  align-items: stretch;
  border-bottom: 1px solid #bfc3c5;
  background: #fdfdfe;
`;

const FileTab = styled.button`
  padding: 0 10px;
  border-radius: 3px 3px 0 0;
  background: linear-gradient(#2b4fa5, #14347f);
  color: #fff;
`;

const MenuTab = styled.button`
  margin: 0 3px;
  padding: 1px 9px 0;

  ${(p) =>
    p.$active &&
    css`
      margin-bottom: -1px;
      padding: 0 8px;
      border: 1px solid #b4b8bb;
      border-bottom: none;
      border-radius: 2px 2px 0 0;
      background: #fff;
    `}
`;

const SearchBox = styled.div`
  display: flex;
  align-items: center;
  gap: 7px;
  margin-left: auto;
  padding-bottom: 3px;

  input {
    width: 128px;
    height: 16px;
    padding: 0 7px;
    border: 1px solid #888;
    background: #fff;
  }

  input::placeholder {
    color: #777;
  }
`;

const Ribbon = styled.div`
  height: 83px;
  display: flex;
  border-bottom: 1px solid #3f4a50;
  background: linear-gradient(#fdfdfd, #f3f5f5 55%, #dadfdf);
`;

const Group = styled.section`
  display: flex;
  flex-direction: column;
  margin-top: 3px;
  padding: ${(p) => (p.$tight ? "0 4px 0 3px" : "0 5px 0 9px")};
  border-right: 1px solid #b9bdbf;
  box-shadow: 1px 0 #fff;

  .items {
    flex: 1;
    display: flex;
    padding-top: 3px;
  }

  footer {
    position: relative;
    line-height: 16px;
    text-align: center;
    color: #555;
  }
`;

const RibbonButton = styled.button`
  display: flex;
  flex-direction: column;
  align-items: center;
  min-width: 35px;
  padding: ${(p) => (p.$wide ? "0 5px" : "0 3px")};
  line-height: 16px;
  white-space: nowrap;
  color: ${(p) => (p.$muted ? "#aaa" : "#111")};

  > svg + span {
    margin-top: 1px;
  }

  .second {
    display: flex;
    align-items: center;
    gap: 2px;
    margin-right: -8px;
    line-height: 11px;
  }
`;

const Launcher = styled.button`
  position: absolute;
  right: 2px;
  top: 5px;
`;

const Body = styled.div`
  flex: 1;
  display: flex;
  gap: 5px;
  background: #dfe3ea;
`;

const Sidebar = styled.aside`
  width: 267px;
  display: flex;
  flex-direction: column;
  border-right: 1px solid #aeb4bb;
  background: linear-gradient(#fdfdfe, #f5f6f8 50%, #dce0e2);
`;

const SideHeader = styled.h2`
  height: 20px;
  display: flex;
  align-items: center;
  gap: 5px;
  margin: 0;
  padding: 0 4px;
  background: linear-gradient(#14337f, #1f44a0);
  color: #fff;
  font-size: 11px;
  font-weight: 400;

  b {
    width: 11px;
    height: 11px;
    margin-right: auto;
    border: 1px solid #c8d2ee;
    border-radius: 50%;
    font-size: 8px;
    line-height: 9px;
    text-align: center;
  }

  svg:last-child {
    margin-left: 4px;
  }
`;

const SideUpdate = styled.div`
  padding: 3px 6px;
  border-bottom: 1px solid #999;
  background: #fff;
`;

const Update = styled.label`
  display: flex;
  align-items: center;
  gap: 3px;
  line-height: 17px;

  select {
    appearance: none;
    width: 45px;
  }
`;

const Tree = styled.ul`
  margin: 0;
  padding: 1px 0 0;
  list-style: none;
`;

const TreeRow = styled.li`
  height: 16px;
  display: flex;
  align-items: center;
  gap: 7px;
  padding-left: ${(p) => (p.$nested ? 15 : 3)}px;
  white-space: nowrap;
  color: ${(p) => (p.$muted ? "#777" : "#111")};
  background: ${(p) => (p.$selected ? "#c6d8fb" : "none")};

  &:nth-child(4n) {
    height: 15px;
  }
`;

const OpenEditor = styled.button`
  display: block;
  width: 116px;
  height: 23px;
  margin: 7px 0 7px 40px;
  border: 1px solid #757575;
  background: #dadada;
`;

const Editor = styled.section`
  flex: 1;
  min-width: 0;
  display: flex;
  flex-direction: column;
`;

const DocTabs = styled.div`
  height: 25px;
  display: flex;
  align-items: flex-end;
  padding: 0 2px 0 16px;
  border-bottom: 1px solid #8f9dc0;
  background: linear-gradient(90deg, #cfd3dc, #c8cfd0);
`;

const DocTab = styled.div`
  position: relative;
  z-index: 0;
  height: 20px;
  display: flex;
  align-items: center;
  gap: 6px;
  padding: ${(p) => (p.$active ? "0 6px 0 9px" : "0 16px 0 9px")};
  color: #222;

  &::before,
  &::after {
    content: "";
    position: absolute;
    z-index: -2;
    inset: 0 0 0 -14px;
    clip-path: polygon(14px 0, 100% 0, 100% 100%, 0 100%);
    background: #949cab;
  }

  &::after {
    z-index: -1;
    inset: 1px 1px 0 -12px;
    background: ${(p) => (p.$active ? "linear-gradient(#e6f0fe, #c3dafb)" : "linear-gradient(#e6e9ee, #cfd4db)")};
  }

  button {
    margin-left: 1px;
  }
`;

const TabMenu = styled.button`
  margin: 0 0 8px auto;
`;

const Frame = styled.div`
  flex: 1;
  display: flex;
  flex-direction: column;
  margin: 4px 1px 3px 3px;
  border: 1px dashed #667;
  background: #fff;
`;

const Toolbar = styled.div`
  height: 22px;
  display: flex;
  align-items: center;
  padding-left: 26px;

  label {
    margin-right: 4px;
  }

  > div {
    display: flex;
    gap: 4px;
    padding: 2px 4px 2px 3px;
    border-left: 1px solid #ccc;
  }
`;

const FieldBar = styled.div`
  height: 26px;
  display: flex;
  align-items: center;
  gap: 5px;
  border-top: 1px solid #aaa;
  border-bottom: 1px solid #999;
  background: linear-gradient(#d9dbe0, #bcc1c3);

  strong {
    font-weight: 600;
  }

  > strong:first-of-type {
    margin: 0 2px 0 -1px;
  }
`;

const CircleButton = styled.button`
  width: 20px;
  height: 20px;
  flex: none;
  display: flex;
  align-items: center;
  justify-content: center;
  border-radius: 50%;
  background: #fff;

  &:disabled {
    border: 1px solid #adb1b4;
    background: none;
  }
`;

const Config = styled.div`
  flex: 1;
  display: flex;
  align-items: center;
  justify-content: center;
  gap: 13px;
  color: #a4abb5;

  strong {
    color: #111;
  }
`;

const Panes = styled.div`
  flex: 1;
  display: flex;
`;

const TablePane = styled.div`
  flex: 1;
  min-width: 0;
  padding: 9px 17px 0 0;
  background: linear-gradient(#fdfdfe, #f1f2f4 50%, #dfe1e4);
`;

const FieldTable = styled.table`
  width: 100%;
  table-layout: fixed;
  border-collapse: separate;
  border-spacing: 0;
  border: 1px solid #7d8187;
  border-radius: 7px;
  overflow: hidden;
  background: #90f38e;
  font-size: 12px;
  line-height: 20px;

  .index {
    width: 16px;
  }

  .note {
    width: 108px;
  }

  th {
    height: 22px;
    padding: 0;
    border-right: 1px solid #a5a8b0;
    font-weight: 600;
  }

  thead th {
    background: linear-gradient(#c6c9ce, #d5cfdc);
  }

  thead th:last-child {
    border-right: none;
  }

  tbody th {
    padding-left: 2px;
    border-bottom: 1px solid #a5a8b0;
    background: #c9ccd1;
    text-align: left;
  }

  td {
    padding: 0 21px 0 0;
    text-align: right;
    color: #14421a;
  }

  .current {
    padding-right: 19px;
    border: 2px solid #111;
    background: #c3d9fb;
    line-height: 18px;
  }
`;

const Strip = styled.div`
  width: 26px;
  display: flex;
  flex-direction: column;
  align-items: center;
  gap: 5px;
  padding-top: 3px;
  border: 1px solid #a9adb1;
  border-width: 0 1px;
  background: linear-gradient(90deg, #c2c6c8, #d5d8db);

  span {
    writing-mode: vertical-rl;
    text-orientation: sideways;
    color: #333;
  }
`;

const PlotPane = styled.div`
  width: 39%;
  margin: 3px 0 0 3px;
  border: 1px solid #444;
  border-width: 2px 0 1px 2px;
  background: linear-gradient(90deg, #eceef0, #f2f3f5);
`;

const Chart = styled.svg`
  width: 100%;
  font-size: 11px;
  fill: #222;

  .axis {
    font-size: 14px;
  }
`;

const StatusBar = styled.footer`
  height: 14px;
  display: flex;
  background: linear-gradient(#1c3f97, #16307c);
  color: #fff;
  line-height: 14px;

  span {
    flex: 1;
    padding-left: 3px;
  }

  span + span {
    border-left: 1px solid #5d77b9;
  }
`;

const Taskbar = styled.nav`
  height: 37px;
  display: flex;
  align-items: stretch;
  background: linear-gradient(90deg, #22383e, #1f3541 60%, #1b2a40);
`;

const TaskButton = styled.button`
  width: 45px;
  display: flex;
  align-items: center;
  justify-content: center;
  background: ${(p) => (p.$current ? "#4b5c62" : "none")};
  box-shadow: ${(p) => (p.$running ? "inset 0 -3px #8fc0e4" : "none")};
`;

const TaskSearch = styled.div`
  width: 264px;
  display: flex;
  align-items: center;
  gap: 9px;
  margin-left: -1px;
  padding-left: 10px;
  background: #f5f5f6;

  input {
    flex: 1;
    min-width: 0;
    font-size: 13px;
  }

  input::placeholder {
    color: #222;
  }
`;

const Tray = styled.div`
  display: flex;
  align-items: center;
  gap: 7px;
  margin-left: auto;
  padding-right: 23px;
  color: #fff;

  span {
    font-size: 14px;
  }

  time {
    margin: 0 10px 0 3px;
    line-height: 18px;
    text-align: center;
  }
`;

const SideToggle = styled.button`
  position: absolute;
  right: 0;
  bottom: 183px;
  width: 22px;
  height: 30px;
  padding-left: 9px;
  border-radius: 15px 0 0 15px;
  background: #3b86f2;
`;

const marks = {
  fields: "left: -4px; top: 187px; width: 295px; height: 171px;",
  button: "left: 34px; top: 206px; width: 153px; height: 44px;",
  values: "left: 509px; top: 231px; width: 168px; height: 153px;",
};

const Mark = styled.span`
  position: absolute;
  ${(p) => marks[p.$box]}
  border: 4px solid #e8281f;
  border-radius: 5px;
  pointer-events: none;
`;

const Watermark = styled.div`
  position: absolute;
  right: 51px;
  bottom: 48px;
  font-size: 57px;
  line-height: 70px;
  color: #fff;
  text-shadow: 2px 3px 1px rgba(80, 80, 80, 0.6);
  pointer-events: none;
`;

export default App;
